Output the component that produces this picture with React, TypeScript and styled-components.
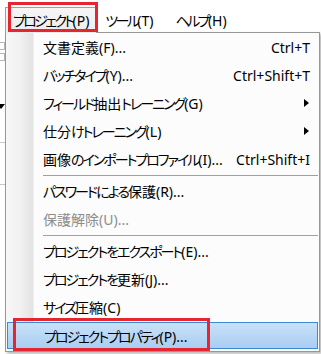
import styled, { createGlobalStyle } from "styled-components"

const GlobalStyle = createGlobalStyle`
	html, body {
		margin: 0;
		padding: 0;
		background: #ffffff;
	}
	body {
		font-family: "Noto Sans", "Noto Sans CJK JP", sans-serif;
		font-size: 14px;
		color: #000000;
	}
`

type Item = {
	label: string
	shortcut?: string
	submenu?: boolean
	disabled?: boolean
	active?: boolean
	separatorBefore?: boolean
}

const items: Item[] = [
	{ label: "文書定義(F)...", shortcut: "Ctrl+T" },
	{ label: "バッチタイプ(Y)...", shortcut: "Ctrl+Shift+T" },
	{ label: "フィールド抽出トレーニング(G)", submenu: true },
	{ label: "仕分けトレーニング(L)", submenu: true },
	{ label: "画像のインポートプロファイル(I)...", shortcut: "Ctrl+Shift+I" },
	{ label: "パスワードによる保護(R)...", separatorBefore: true },
	{ label: "保護解除(U)...", disabled: true },
	{ label: "プロジェクトをエクスポート(E)...", separatorBefore: true },
	{ label: "プロジェクトを更新(J)..." },
	{ label: "サイズ圧縮(C)" },
	{ label: "プロジェクトプロパティ(P)...", active: true },
]

// kana glyphs are narrower in the original UI font, so tighten only those runs
const Text = ({ children }: { children: string }) => {
	const parts = children.split(/([\u3040-\u30ff]+)/).filter(Boolean)
	return (
		<>
			{parts.map((part, i) =>
				/[\u3040-\u30ff]/.test(part) ? <Kana key={i}>{part}</Kana> : <span key={i}>{part}</span>
			)}
		</>
	)
}

const App = () => {
	return (
		<Page>
			<GlobalStyle />
			<MenuBar>
				<BarItem open>
					<Text>プロジェクト(P)</Text>
					<BarMark />
				</BarItem>
				<BarItem>
					<Text>ツール(T)</Text>
				</BarItem>
				<BarItem>
					<Text>ヘルプ(H)</Text>
				</BarItem>
			</MenuBar>

			<Workspace>
				<SmallBox />
				<SmallBox />
				<DropArrow />
				<Rule $top={30} />
				<Rule $top={38} />
			</Workspace>

			<Menu>
				{items.map((item) => (
					<div key={item.label}>
						{item.separatorBefore && <Separator />}
						<Row $disabled={item.disabled} $active={item.active}>
							<Label>
								<Text>{item.label}</Text>
							</Label>
							{item.shortcut && <Shortcut>{item.shortcut}</Shortcut>}
							{item.submenu && <SubArrow />}
							{item.active && <RowMark />}
						</Row>
					</div>
				))}
			</Menu>
		</Page>
	)
}

const Page = styled.div`
	position: relative;
	width: 321px;
	height: 354px;
	overflow: hidden;
	background: #ffffff;
`

const Kana = styled.span`
	letter-spacing: -2px;
`

const MenuBar = styled.div`
	display: flex;
	align-items: flex-end;
	height: 33px;
	padding-left: 5px;
	box-sizing: border-box;
	background: #ffffff;
`

const BarItem = styled.div<{ open?: boolean }>`
	position: relative;
	height: 24px;
	display: flex;
	align-items: center;
	padding: 0 7px 1px 7px;
	margin-right: ${(p) => (p.open ? "0" : "6px")};
	border: 1px solid ${(p) => (p.open ? "#a0a0a0" : "transparent")};
	border-bottom: none;
	background: ${(p) => (p.open ? "linear-gradient(#f6f6f6, #ececec)" : "transparent")};
	white-space: nowrap;
	font-feature-settings: "palt";
	z-index: 2;

	${Kana} {
		letter-spacing: -2.6px;
	}
`

const BarMark = styled.div`
	position: absolute;
	left: 2px;
	top: -6px;
	width: 90px;
	height: 30px;
	box-sizing: border-box;
	border: 3px solid #e52630;
`

const Workspace = styled.div`
	position: relative;
	padding-top: 9px;
	display: flex;
	flex-direction: column;
	gap: 3px;
`

const SmallBox = styled.div`
	width: 4px;
	height: 6px;
	border: 1px solid #b8b8b8;
	border-left: none;
`

const DropArrow = styled.div`
	margin-top: 40px;
	width: 0;
	height: 0;
	border-left: 4px solid transparent;
	border-right: 4px solid transparent;
	border-top: 5px solid #000;
	margin-left: -3px;
`

const Rule = styled.div<{ $top: number }>`
	margin-top: ${(p) => p.$top}px;
	width: 6px;
	height: 1px;
	background: #c8c8c8;
`

const Menu = styled.div`
	position: absolute;
	left: 5px;
	top: 32px;
	width: 315px;
	box-sizing: border-box;
	border: 1px solid #979797;
	background:
		linear-gradient(to right, #f7f7f7 0px, #f1f1f1 14px, #e3e3e3 27px, #fdfdfd 28px) no-repeat 0 0 / 28px 100%,
		#fcfcfc;
	box-shadow: 2px 2px 3px rgba(0, 0, 0, 0.28);
	z-index: 1;
`

const Row = styled.div<{ $disabled?: boolean; $active?: boolean }>`
	position: relative;
	display: flex;
	align-items: center;
	height: ${(p) => (p.$active ? "25px" : "28px")};
	margin: ${(p) => (p.$active ? "1px 1px 2px 1px" : "0")};
	padding: 0 9px 0 ${(p) => (p.$active ? "36px" : "37px")};
	border: ${(p) => (p.$active ? "1px solid #3a8ad8" : "none")};
	background: ${(p) => (p.$active ? "linear-gradient(#c9e1f8, #a9cdf1)" : "transparent")};
	color: ${(p) => (p.$disabled ? "#8d8d8d" : "#000000")};
	white-space: nowrap;
	font-feature-settings: "palt";
`

const Label = styled.span`
	flex: 1;
`

const Shortcut = styled.span`
	margin-left: 8px;
`

const SubArrow = styled.span`
	width: 0;
	height: 0;
	margin-right: 1px;
	border-top: 4px solid transparent;
	border-bottom: 4px solid transparent;
	border-left: 5px solid #000000;
`

const RowMark = styled.div`
	position: absolute;
	left: 5px;
	top: -5px;
	width: 197px;
	height: 33px;
	box-sizing: border-box;
	border: 3px solid #e52630;
`

const Separator = styled.div`
	height: 1px;
	margin: 2px 1px 1px 37px;
	background: #a0a0a0;
`

export default App
